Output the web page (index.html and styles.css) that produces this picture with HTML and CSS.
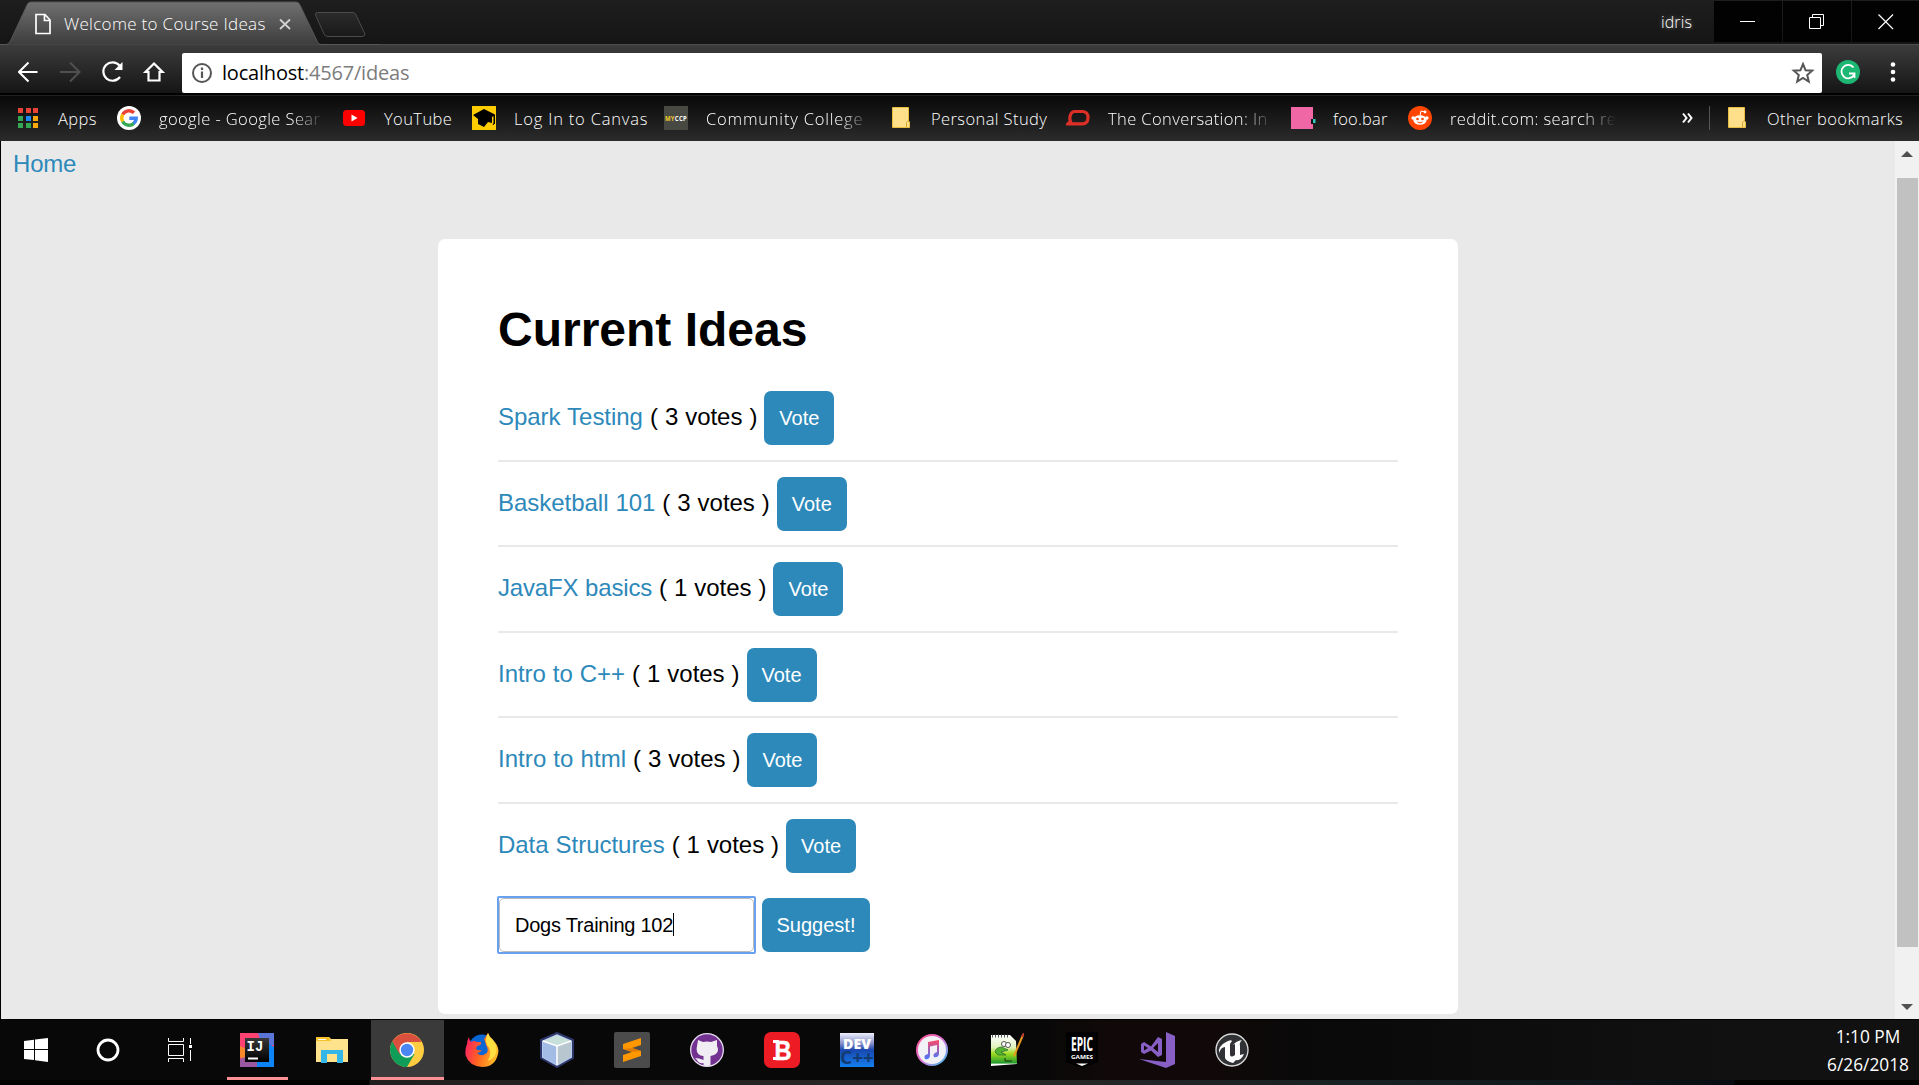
FILE: index.html
```html
<!DOCTYPE html>
<html lang="en">
<head>
<meta charset="utf-8">
<title>Welcome to Course Ideas</title>
<link rel="stylesheet" href="styles.css">
</head>
<body>
<div class="screen">
  <header class="tabs">
    <div class="tab">
      <svg class="tab-shape" width="380" height="45" viewBox="0 0 380 45">
        <defs>
          <linearGradient id="tabfill" x1="0" y1="0" x2="0" y2="1"><stop offset="0" stop-color="#707070"/><stop offset="1" stop-color="#3d3d3d"/></linearGradient>
          <linearGradient id="newfill" x1="0" y1="0" x2="0" y2="1"><stop offset="0" stop-color="#2b2b2b"/><stop offset="1" stop-color="#191919"/></linearGradient>
        </defs>
        <path d="M0 44.500H7L10 42L27 5Q28 2 31 2H296Q299 2 300 5L317 41Q318 44.500 321 44.500H380" fill="url(#tabfill)" stroke="#575757"/>
        <path d="M317.500 12.500H353Q355 12.500 356 15L365 34Q365 36.500 362 36.500H328Q325 36.500 324 34L315.500 15Q315 12.500 317.500 12.500Z" fill="url(#newfill)" stroke="#4b4b4b"/>
        <path d="M36 14.500H45L50 20V33.500H36ZM44.500 14.500V20.500H50" fill="none" stroke="#fff" stroke-width="1.700"/>
        <path d="M280 19.500L290 29M290 19.500L280 29" stroke="#d2d2d2" stroke-width="1.800"/>
      </svg>
      <span class="tab-title">Welcome to Course Ideas</span>
    </div>
    <span class="user">idris</span>
    <div class="window-buttons">
      <span><svg width="16" height="16"><path d="M0 7.500H15" stroke="#fff"/></svg></span>
      <span><svg width="16" height="16"><path d="M.5 3.500H11.500V14.500H.5ZM3.500 3.500V.5H14.500V11.500H11.500" fill="none" stroke="#fff"/></svg></span>
      <span><svg width="16" height="16"><path d="M.5 .5L15 15M15 .5L.5 15" stroke="#fff" stroke-width="1.200"/></svg></span>
    </div>
  </header>

  <div class="toolbar">
    <svg class="nav" width="164" height="40" viewBox="0 0 164 40" fill="none" stroke="#fff" stroke-width="2">
      <path d="M19.500 20H1M10.500 10.500L1 20L10.500 29.500"/>
      <path d="M42 20H60.500M52 10.500L61.500 20L52 29.500" stroke="#505050"/>
      <path d="M101.500 13.500A9.200 9.200 0 1 0 102 25" stroke-width="2.200"/><path d="M104.500 10V18H96.500Z" fill="#fff" stroke="none"/>
      <path d="M136 11.500L144.500 20H141.500V28.500H130.500V20H127.500Z" stroke-width="2.200" />
    </svg>
    <div class="address">
      <svg width="22" height="22" viewBox="0 0 22 22"><circle cx="11" cy="11" r="9" fill="none" stroke="#555" stroke-width="2"/><path d="M11 9.500V16M11 5.500V8" stroke="#555" stroke-width="2.200"/></svg>
      <span class="url">localhost<i>:4567/ideas</i></span>
      <svg class="star" width="24" height="24" viewBox="0 0 24 24"><path d="M12 3L14.600 9.300L21.200 9.700L16.200 14.100L17.800 20.600L12 17L6.200 20.600L7.800 14.100L2.800 9.700L9.400 9.300Z" fill="none" stroke="#555" stroke-width="2"/></svg>
    </div>
    <svg class="grammar" width="24" height="24" viewBox="0 0 24 24"><circle cx="12" cy="12" r="12" fill="#1cb773"/><path d="M17.500 7.500A6.700 6.700 0 1 0 18 15M13 13.500H18.500V18" fill="none" stroke="#fff" stroke-width="1.800"/></svg>
    <svg class="dots" width="6" height="22" fill="#fff"><circle cx="3" cy="3.500" r="2.300"/><circle cx="3" cy="11" r="2.300"/><circle cx="3" cy="18.500" r="2.300"/></svg>
  </div>

  <nav class="bookmarks">
    <a><svg width="24" height="24" viewBox="0 0 24 24"><path fill="#ea4335" d="M2 2h5v5H2zM10 2h5v5h-5zM17 2h5v5h-5z"/><path fill="#34a853" d="M2 10h5v5H2zM2 17h5v5H2zM10 17h5v5h-5z"/><path fill="#1e88f5" d="M10 10h5v5h-5z"/><path fill="#fba80b" d="M17 10h5v5h-5zM17 17h5v5h-5z"/></svg><span>Apps</span></a>
    <a><svg width="24" height="24" viewBox="0 0 24 24" fill="none" stroke-width="3.400"><circle cx="12" cy="12" r="12" fill="#fff"/><path d="M5.700 8.500A7.200 7.200 0 0 1 17 6.800" stroke="#ea4335"/><path d="M5.700 15.500A7.200 7.200 0 0 1 5.700 8.500" stroke="#fbbc05"/><path d="M17 17.200A7.200 7.200 0 0 1 5.700 15.500" stroke="#34a853"/><path d="M12.300 12.200H19.200Q19.200 15.500 16.500 17.500" stroke="#4285f4"/></svg><span class="cut">google - Google Sear</span></a>
    <a><svg width="24" height="24" viewBox="0 0 24 24"><rect x="1" y="4" width="22" height="16" rx="3.500" fill="#f00"/><path d="M9.500 8.500V15.500L15.500 12Z" fill="#fff"/></svg><span>YouTube</span></a>
    <a><svg width="24" height="24" viewBox="0 0 24 24"><path fill="#fc0" d="M0 0h24v24H0z"/><path d="M1 9L12 3L23 8.500V18H22V19L20.500 18.500L21.500 17V10L20 11V17L16 16L12 21L6 18V13Z"/></svg><span class="loose">Log In to Canvas</span></a>
    <a><svg width="24" height="24" viewBox="0 0 24 24"><path fill="#494943" d="M0 0h24v24H0z"/><text x="1" y="15" font-size="7.500" font-weight="700" fill="#f4cc2a" textLength="22" lengthAdjust="spacingAndGlyphs">MY<tspan fill="#fff">CCP</tspan></text></svg><span class="cut loose">Community College</span></a>
    <a><svg width="24" height="24" viewBox="0 0 24 24"><path d="M3.500 1.500H19.500V15L20.500 16V21.500H3.500Z" fill="#ffe08a" stroke="#e9bd3d"/><path d="M17.500 21V16.500Q18 15 19.500 15" fill="none" stroke="#d9a42c"/></svg><span>Personal Study</span></a>
    <a><svg width="24" height="24" viewBox="0 0 24 24"><path d="M8 5.500H17Q22 6 22 11.500Q22 17.500 17 17.800H2L4.500 15.500Q3.500 13 4 10.500Q5 6 8 5.500Z" fill="none" stroke="#dc3027" stroke-width="3.200"/></svg><span class="cut">The Conversation: In</span></a>
    <a><svg width="25" height="24" viewBox="0 0 25 24"><path fill="#f067a6" d="M0 1h22v22H0z"/><path fill="#101010" d="M20 13h3v5h-3z"/><path fill="#31cbc1" d="M22 13h2.500v4H22z"/></svg><span class="foobar">foo.bar</span></a>
    <a><svg width="24" height="24" viewBox="0 0 24 24"><circle cx="12" cy="12" r="12" fill="#ff4500"/><ellipse cx="12" cy="14" rx="6.700" ry="4.800" fill="#fff"/><circle cx="5.200" cy="12" r="1.800" fill="#fff"/><circle cx="18.800" cy="12" r="1.800" fill="#fff"/><path d="M12 9.500L13 5L16.500 5.800" fill="none" stroke="#fff"/><circle cx="17" cy="6" r="1.400" fill="#fff"/><circle cx="9.500" cy="13" r="1.300" fill="#ff4500"/><circle cx="14.500" cy="13" r="1.300" fill="#ff4500"/><path d="M9.500 16Q12 17.700 14.500 16" fill="none" stroke="#ff4500"/></svg><span class="cut">reddit.com: search re</span></a>
    <svg class="more" width="12" height="12" viewBox="0 0 12 12"><path d="M1 1.500L4.500 6L1 10.500M6 1.500L9.500 6L6 10.500" fill="none" stroke="#fff" stroke-width="2"/></svg>
    <a class="other"><svg width="24" height="24" viewBox="0 0 24 24"><path d="M3.500 1.500H19.500V15L20.500 16V21.500H3.500Z" fill="#ffe08a" stroke="#e9bd3d"/><path d="M17.500 21V16.500Q18 15 19.500 15" fill="none" stroke="#d9a42c"/></svg><span>Other bookmarks</span></a>
  </nav>

  <div class="viewport">
    <main class="page">
      <a class="home">Home</a>
      <section class="card">
        <h1>Current Ideas</h1>
        <ul>
          <li><a>Spark Testing</a> ( 3 votes ) <button>Vote</button></li>
          <li><a>Basketball 101</a> ( 3 votes ) <button>Vote</button></li>
          <li><a class="tight">JavaFX basics</a> ( 1 votes ) <button>Vote</button></li>
          <li><a>Intro to C++</a> ( 1 votes ) <button>Vote</button></li>
          <li><a class="wide">Intro to html</a> ( 3 votes ) <button>Vote</button></li>
          <li><a>Data Structures</a> ( 1 votes ) <button>Vote</button></li>
        </ul>
        <form>
          <div class="field"><div class="field-inner">Dogs Training 102<span class="caret"></span></div></div>
          <button type="button" class="suggest">Suggest!</button>
        </form>
      </section>
    </main>
    <div class="scrollbar">
      <svg width="12" height="6"><path d="M0 6L6 0L12 6Z" fill="#505050"/></svg>
      <div class="thumb"></div>
      <svg width="12" height="6"><path d="M0 0L6 6L12 0Z" fill="#505050"/></svg>
    </div>
  </div>

  <footer class="taskbar">
    <div class="apps">
      <span><svg width="24" height="24" viewBox="0 0 24 24"><path fill="#fff" d="M0 3L10 1.700V11H0ZM11 1.500L24 0V11H11ZM0 12H10V22L0 21ZM11 12H24V24L11 22.300Z"/></svg></span>
      <span><svg width="24" height="24" viewBox="0 0 24 24"><circle cx="12" cy="12" r="10" fill="none" stroke="#fff" stroke-width="2.800"/></svg></span>
      <span class="taskview"><svg width="24" height="24" viewBox="0 0 24 24"><path d="M.5 0V3.500H15.500V0M.5 24V20.500H15.500V24M.5 6.500H15.500V17.500H.5ZM22.500 0V6M22.500 12V23" fill="none" stroke="#fff"/><path fill="#fff" d="M21 7h3v3h-3z"/></svg></span>
      <span class="running"><svg width="34" height="34" viewBox="0 0 34 34"><defs><linearGradient id="ij" x1="0" y1="0" x2="0" y2="1"><stop offset="0" stop-color="#383838"/><stop offset="1" stop-color="#000"/></linearGradient></defs><path fill="#ff4271" d="M0 0H34V34H0Z"/><path fill="#5a74d8" d="M18 0H34V12H22Z"/><path fill="#0d84f5" d="M22 6L34 14V34H16V24Z"/><path fill="#f7892b" d="M0 13L10 18L6 28L0 24Z"/><path fill="#9b57a0" d="M0 26L5 24L17 28V34H0Z"/><path fill="url(#ij)" d="M5 5h24v24H5z"/><text class="mono" x="6.500" y="18" font-size="14" fill="#fff" textLength="17">IJ</text><path fill="#fff" d="M8 24.500h10v2H8z"/></svg></span>
      <span><svg width="34" height="34" viewBox="0 0 34 34"><path d="M1 4H14L16 6H33V29H1Z" fill="#ffe28c"/><path d="M1 4H14L16 8H1Z" fill="#f8c32a"/><path fill="#fff" d="M3 6h8v1H3z"/><path d="M6 30V17H28V30H22V21H12V30Z" fill="#34b6e8"/></svg></span>
      <span class="current"><svg width="34" height="34" viewBox="0 0 34 34"><circle cx="17" cy="17" r="17" fill="#ffcd42"/><path d="M17 17L2.300 8.500A17 17 0 0 0 17 34L24.500 21Z" fill="#109d58"/><path d="M17 17L9.500 21L2.300 8.500A17 17 0 0 1 31.700 9H17Z" fill="#d9503f"/><circle cx="17" cy="17" r="7.700" fill="#fff"/><circle cx="17" cy="17" r="6.200" fill="#4b87f2"/></svg></span>
      <span><svg width="34" height="34" viewBox="0 0 34 34"><defs><linearGradient id="ff" x1="0" y1=".4" x2="1" y2=".7"><stop offset="0" stop-color="#ff2460"/><stop offset=".45" stop-color="#ff6520"/><stop offset="1" stop-color="#ffc52b"/></linearGradient></defs><circle cx="17" cy="15" r="13.500" fill="#0866d5"/><path d="M4 4Q4 7 6 9Q9 7 12 9L16 9Q17 12 12 13L11 16Q13 18 17 17Q15 20 12 20Q16 24 20 21Q25 19 21 12Q20 8 19 6L23 0Q24 4 28 7Q35 14 33 21Q30 34 17 34Q4 33 .5 22Q0 15 2 11Q2 7 4 4Z" fill="url(#ff)"/><path d="M23 0Q19 7 22 12Q28 18 23 28Q34 23 31 12Q28 6 25 4Z" fill="#ffe040"/></svg></span>
      <span><svg width="34" height="36" viewBox="0 0 34 36"><path d="M17 1L33 8V26L17 35L1 26V8Z" fill="#b4caf0" stroke="#2d3668" stroke-width="2"/><path d="M3 9L17 3L31 9L17 14Z" fill="#c6dfda"/><path d="M3 9L17 14V33L3 25Z" fill="#a2bce6"/><path d="M31 9L17 14V33L31 25Z" fill="#b8c7cf"/><path d="M17 14V33M3 9L17 14L31 9" fill="none" stroke="#fff" stroke-width="1.500"/></svg></span>
      <span><svg width="36" height="36" viewBox="0 0 36 36"><rect width="36" height="36" rx="2" fill="#4b4b4b"/><path d="M9 12L27 6V13L18 16L27 19V24L9 30V23L18 20L9 17Z" fill="#ff9800"/><path d="M9 17L18 20L27 19L18 16Z" fill="#e27b05"/></svg></span>
      <span><svg width="34" height="34" viewBox="0 0 34 34"><defs><clipPath id="gh"><circle cx="17" cy="17" r="16"/></clipPath></defs><circle cx="17" cy="17" r="17" fill="#e7dfee"/><circle cx="17" cy="17" r="15.700" fill="#733191"/><g clip-path="url(#gh)"><path d="M8 7L13 9Q17 8 21 9L27 7V13Q30 19 24 22L20.500 23V34H13.500V30Q9 31 7 27L5 25Q9 25 13.500 27V23Q5 22 7 13Z" fill="#f0edf3"/></g></svg></span>
      <span><svg width="36" height="36" viewBox="0 0 36 36"><rect width="36" height="36" rx="7" fill="#ed1c24"/><text class="bold-b" x="10.500" y="28" font-size="28" fill="#fff" stroke="#fff" stroke-width=".5" textLength="17" lengthAdjust="spacingAndGlyphs">B</text><path fill="#fff" d="M9 8h6v3H9zM9 25h6v3H9z"/></svg></span>
      <span><svg width="34" height="34" viewBox="0 0 34 34"><defs><linearGradient id="dev" x1="0" y1="0" x2="0" y2="1"><stop offset="0" stop-color="#eef0ff"/><stop offset=".3" stop-color="#8991c9"/><stop offset=".5" stop-color="#1947b0"/><stop offset="1" stop-color="#147fee"/></linearGradient></defs><path fill="url(#dev)" d="M0 0h34v34H0z"/><text x="3" y="15.500" font-size="14.500" font-weight="800" fill="#fff" textLength="28" lengthAdjust="spacingAndGlyphs">DEV</text><text x="0" y="31" font-size="17" font-weight="700" fill="#123b70" textLength="34" lengthAdjust="spacingAndGlyphs">C++</text></svg></span>
      <span><svg width="32" height="32" viewBox="0 0 32 32"><defs><linearGradient id="it" x1="0" y1="0" x2="1" y2="1"><stop offset="0" stop-color="#ff4b80"/><stop offset=".5" stop-color="#e074da"/><stop offset="1" stop-color="#28c8ed"/></linearGradient><linearGradient id="note" x1="0" y1="0" x2="0" y2="1"><stop offset="0" stop-color="#ff4867"/><stop offset="1" stop-color="#4777ff"/></linearGradient></defs><circle cx="16" cy="16" r="16" fill="url(#it)"/><circle cx="16" cy="16" r="14" fill="#f2f1f6"/><path d="M12 8L23 6V20Q22 24 18 23Q16 20 21 18V11L14 12.500V22Q13 26 9 25Q7 21 12 20Z" fill="url(#note)"/></svg></span>
      <span><svg width="34" height="34" viewBox="0 0 34 34"><defs><linearGradient id="np" x1="0" y1="0" x2="0" y2="1"><stop offset="0" stop-color="#fff"/><stop offset=".4" stop-color="#dff3bc"/><stop offset=".6" stop-color="#a0dc20"/><stop offset=".9" stop-color="#239b2d"/><stop offset=".95" stop-color="#fff"/></linearGradient></defs><path d="M1 2H20L26 8L27 31L1 33Z" fill="url(#np)"/><path d="M2 3H18" stroke="#555" stroke-dasharray="1 2" stroke-width="3"/><circle cx="14" cy="11" r="2.500" fill="#fff" stroke="#555"/><circle cx="18" cy="12" r="2.500" fill="#fff" stroke="#555"/><path d="M5 19Q6 14 12 14L18 17L11 19L16 22H8Z" fill="#54b431" stroke="#286628" stroke-width=".7"/><path d="M15 25V28H22" stroke="#16330a" fill="none"/><path d="M33 2L24 23" stroke="#e89a20" stroke-width="2"/><path d="M34 0L32 4" stroke="#b83b32" stroke-width="2"/></svg></span>
      <span><svg width="32" height="36" viewBox="0 0 32 36"><path d="M2 0H30Q32 0 32 2V30L16 36L0 30V2Q0 0 2 0Z" fill="#000"/><text x="5" y="19" font-size="19" font-weight="700" fill="#fff" textLength="22" lengthAdjust="spacingAndGlyphs">EPIC</text><text x="5" y="26.500" font-size="6" font-weight="700" fill="#fff" textLength="22" lengthAdjust="spacingAndGlyphs">GAMES</text><path d="M10 31.500H22L16 34Z" fill="#fff"/></svg></span>
      <span><svg width="36" height="36" viewBox="0 0 36 36"><path d="M27 0L36 4V32L27 36L0 27L27 30Z" fill="#875fc5"/><path d="M5 10L12 14.500L19 5L23 7V23L19 25L12 18.500L5 22L2 20V12ZM5 13.500V18.500L9 16ZM19 11V20L14 16Z" fill="#875fc5" fill-rule="evenodd"/></svg></span>
      <span><svg width="34" height="34" viewBox="0 0 34 34"><circle cx="17" cy="17" r="16" fill="#303235" stroke="#ddd" stroke-width="1.300"/><path d="M4 20Q3 13 11 9Q16 6 17 8L15 11V22Q16 25 20 22V11L18 12Q21 8 27 7Q24 10 25 13V22L29 21Q26 28 21 27L18 30Q11 28 10 25V14Q6 14 4 20Z" fill="#fff"/></svg></span>
    </div>
    <div class="clock"><span>1:10 PM</span><span>6/26/2018</span></div>
  </footer>
  <div class="desktop-edge"></div>
</div>
</body>
</html>
```
FILE: styles.css
```css
* { box-sizing: border-box; }
body { margin: 0; background: #000; }
.screen { width: 1919px; height: 1085px; overflow: hidden; font-family: "Open Sans", "Noto Sans", sans-serif; display: flex; flex-direction: column; }
svg { display: block; flex: none; }

.tabs { height: 45px; flex: none; display: flex; background: linear-gradient(#1e1e1e, #151515); border-bottom: 1px solid #4c4c4c; }
.tab { position: relative; flex: 1; padding-left: 64px; }
.tab-shape { position: absolute; left: 0; top: 0; }
.tab-title { position: relative; font-size: 17px; line-height: 48px; font-weight: 300; color: #fff; letter-spacing: .3px; white-space: nowrap; }
.user { width: 53px; font-size: 16px; line-height: 44px; color: #fff; font-weight: 300; letter-spacing: .1px; text-shadow: 0 0 4px #888; }
.window-buttons { display: grid; grid-template-columns: 68px 68px 67px; gap: 1px; height: 42px; padding-top: 1px; }
.window-buttons span { background: #020202; display: flex; align-items: center; justify-content: center; }

.toolbar { height: 48px; flex: none; display: flex; align-items: center; padding: 6px 23px 0 18px; background: linear-gradient(#3c3c3c, #151515); }
.address { width: 1640px; height: 40px; margin: 1px 14px 0 0; background: #fff; border-radius: 2px; display: flex; align-items: center; padding: 0 7px 0 9px; }
.url { font-size: 20px; line-height: 40px; margin-left: 9px; color: #000; letter-spacing: -.2px; }
.url i { font-style: normal; color: #7c7c7c; }
.star { margin-left: auto; }
.dots { margin-left: auto; }

.bookmarks { height: 48px; flex: none; border-top: 2px solid #000; display: grid; grid-template-columns: 101px 225px 130px 192px 225px 177px 225px 117px 274px 27px 1fr; align-items: center; padding-left: 16px; background: linear-gradient(#080808, #2b2b2b); box-shadow: inset 0 1px #222; color: #fff; font-size: 16.500px; font-weight: 300; letter-spacing: .4px; }
.bookmarks a { display: flex; align-items: center; gap: 18px; white-space: nowrap; }
.bookmarks .loose { letter-spacing: .8px; }
.foobar { margin-left: -1px; letter-spacing: .2px; }
.cut { width: 166px; -webkit-mask-image: linear-gradient(90deg, #000 80%, transparent); mask-image: linear-gradient(90deg, #000 80%, transparent); }
.bookmarks .other { border-left: 1px solid #555; height: 24px; padding-left: 15px; }

.viewport { height: 878px; flex: none; display: flex; overflow: hidden; border-left: 1px solid #000; background: #e9e9e9; }
.page { width: 1894px; font-family: "Liberation Sans", Arial, sans-serif; font-size: 24px; color: #000; }
.page a { color: #2d89ba; }
.home { display: block; height: 98px; padding: 8px 0 0 12px; line-height: 30px; letter-spacing: -.2px; }
.card { width: 1020px; height: 775px; margin-left: 437px; padding: 60px 60px 0; background: #fff; border-radius: 7px; }
h1 { margin: 0; font-size: 48px; line-height: 62px; }
ul { margin: 15px 0 0; padding: 0; list-style: none; }
li { height: 85.600px; padding-top: 14px; border-bottom: 2px solid #e9e9e9; line-height: 54px; letter-spacing: -.03px; word-spacing: .35px; }
li:last-child { border: 0; }
.tight { letter-spacing: -.18px; }
.wide { letter-spacing: .05px; }
button { display: inline-block; width: 70px; height: 54px; padding: 0; border: 0; border-radius: 7px; background: #2d89ba; color: #fff; font: 20px/54px "Liberation Sans", Arial, sans-serif; vertical-align: baseline; }
form { display: flex; gap: 6px; margin-top: 6px; margin-left: -1px; }
.field { width: 259px; height: 58px; border: 2px solid #68a0f0; border-radius: 2px; }
.field-inner { height: 54px; border: 1px solid #bbb; border-radius: 5px; padding-left: 15px; font-size: 20px; line-height: 52px; letter-spacing: -.25px; white-space: nowrap; display: flex; align-items: center; }
.caret { width: 1px; height: 23px; background: #000; }
form .suggest { width: 108px; margin-top: 2px; }

.scrollbar { width: 24px; background: #f1f1f1; display: flex; flex-direction: column; align-items: center; padding: 10px 0 9px; }
.thumb { width: 21px; height: 769px; margin: 21px 0 auto 1px; background: #c1c1c1; }

.taskbar { height: 61px; flex: none; border-top: 1px solid #000; background: linear-gradient(90deg, #080808 54%, #110909 58%, #110909 63%, #090909 68%, #111 90%); display: flex; justify-content: space-between; }
.apps { display: grid; grid-template-columns: 72px 72px 75.500px repeat(14, 75px); }
.apps span { display: flex; align-items: center; justify-content: center; }
.apps .taskview { padding-right: 3px; }
.apps .running { background: linear-gradient(#ff9095, #ff9095) center bottom / 61px 3px no-repeat; }
.apps .current { width: 73px; margin-left: 1.500px; background: #3a3a3a; border-bottom: 3px solid #ff9095; padding: 3px 2px 0 0; }
.mono { font-family: "Liberation Mono", monospace; font-weight: 700; }
.bold-b { font-family: "Liberation Sans", sans-serif; font-weight: 700; }
.clock { width: 102px; padding-top: 3px; display: flex; flex-direction: column; align-items: center; font-size: 17.300px; line-height: 28px; color: #fff; white-space: nowrap; }
.desktop-edge { flex: 1; background: linear-gradient(90deg, #000 369px, #231f1e 370px, #292827 1000px, #172023 1400px, #080c12 1734px, #000 1735px); }
```
